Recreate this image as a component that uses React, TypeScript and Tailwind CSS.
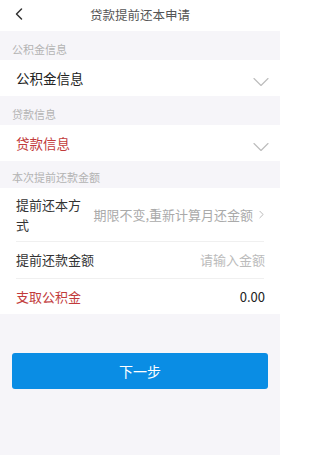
import { ChevronLeft, ChevronDown, ChevronRight } from 'lucide-react';

const font = "font-['Noto_Sans_CJK_SC','Noto_Sans',sans-serif]";

function SectionLabel({ text }: { text: string }) {
  return (
    <div className="h-[29px] px-3 pt-[11px] text-[11px] leading-[14px] text-[#b3b3b3]">{text}</div>
  );
}

function SelectRow({ text, red }: { text: string; red?: boolean }) {
  return (
    <div className="h-[36px] bg-white pl-4 pr-[5px] flex items-center justify-between">
      <span className={`text-[13.5px] ${red ? 'text-[#c23b3b]' : 'text-[#222]'}`}>{text}</span>
      <ChevronDown className="w-[28px] h-[28px] mt-[7px] text-[#bdbdbd]" strokeWidth={1} />
    </div>
  );
}

export default function App() {
  return (
    <div className={`w-[280px] h-[455px] bg-[#f6f5f9] ${font} overflow-hidden`}>
      <header className="h-[31px] bg-white relative flex items-center justify-center">
        <ChevronLeft className="absolute left-[9px] top-[4px] w-[20px] h-[20px] text-[#333]" strokeWidth={1.8} />
        <h1 className="text-[12.5px] text-[#555]">贷款提前还本申请</h1>
      </header>

      <SectionLabel text="公积金信息" />
      <SelectRow text="公积金信息" />
      <SectionLabel text="贷款信息" />
      <SelectRow text="贷款信息" red />
      <div className="h-[27px] px-3 pt-[9px] text-[11px] leading-[14px] text-[#b3b3b3]">本次提前还款金额</div>

      <div className="bg-white px-4">
        <div className="h-[54px] flex items-center justify-between border-b border-[#f0f0f0]">
          <span className="w-[72px] text-[13px] leading-[20px] text-[#333]">提前还本方式</span>
          <span className="flex items-center text-[13px] text-[#aaa] -mr-[4px]">
            期限不变,重新计算月还金额
            <ChevronRight className="w-[13px] h-[13px] ml-[2px]" strokeWidth={1.5} />
          </span>
        </div>
        <div className="h-[37px] flex items-center justify-between border-b border-[#f0f0f0]">
          <span className="text-[13px] text-[#333]">提前还款金额</span>
          <span className="text-[13px] text-[#bbb] -mr-[1px]">请输入金额</span>
        </div>
        <div className="h-[35px] flex items-center justify-between">
          <span className="text-[13px] text-[#c23b3b]">支取公积金</span>
          <span className="text-[13px] text-[#222] -mr-[1px]">0.00</span>
        </div>
      </div>

      <div className="px-3 pt-[39px]">
        <button className="w-full h-[36px] rounded-[3px] bg-[#0a8de4] text-white text-[14px]">下一步</button>
      </div>
    </div>
  );
}
